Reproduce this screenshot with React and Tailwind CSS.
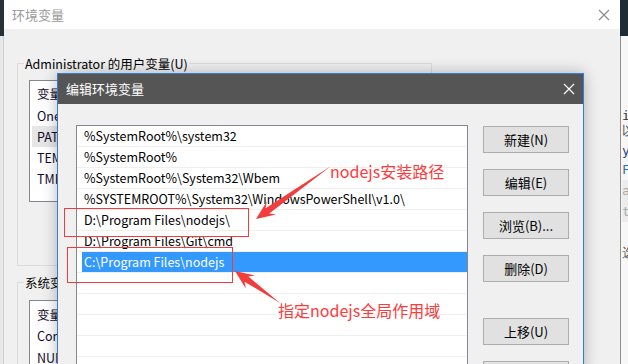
import React from 'react';

const paths = [
  '%SystemRoot%\\system32',
  '%SystemRoot%',
  '%SystemRoot%\\System32\\Wbem',
  '%SYSTEMROOT%\\System32\\WindowsPowerShell\\v1.0\\',
  'D:\\Program Files\\nodejs\\',
  'D:\\Program Files\\Git\\cmd',
  'C:\\Program Files\\nodejs',
  '',
  '',
  '',
  '',
  '',
];

const userVars = ['One', 'PATH', 'TEMP', 'TMP'];

// tapered annotation arrow, tail -> tip
const arrowPoints = (x1, y1, x2, y2, head = 19, wing = 8, neck = 3.2) => {
  const dx = x2 - x1;
  const dy = y2 - y1;
  const len = Math.hypot(dx, dy);
  const ux = dx / len;
  const uy = dy / len;
  const nx = -uy;
  const ny = ux;
  const bx = x2 - ux * head;
  const by = y2 - uy * head;
  const kx = x2 - ux * (head - 5);
  const ky = y2 - uy * (head - 5);
  return [
    [x1, y1],
    [kx + nx * neck, ky + ny * neck],
    [bx + nx * wing, by + ny * wing],
    [x2, y2],
    [bx - nx * wing, by - ny * wing],
    [kx - nx * neck, ky - ny * neck],
  ]
    .map((p) => p.map((v) => v.toFixed(1)).join(','))
    .join(' ');
};

const CloseIcon = ({ className }) => (
  <svg width="12" height="12" viewBox="0 0 12 12" className={className}>
    <path d="M1 1 L11 11 M11 1 L1 11" stroke="currentColor" strokeWidth="1.2" fill="none" />
  </svg>
);

const Button = ({ label, className = '' }) => (
  <div className={`h-[27px] w-[86px] flex items-center justify-center bg-[#e1e1e1] border border-[#adadad] text-[13px] text-black ${className}`}>
    {label}
  </div>
);

const App = () => {
  return (
    <div className="relative w-[628px] h-[364px] overflow-hidden bg-[#f0f0f0] font-['Noto_Sans_CJK_SC','Noto_Sans',sans-serif]">
      {/* editor behind, left edge */}
      <div className="absolute left-0 top-0 w-[4px] h-full flex flex-col">
        <div className="h-[36px] bg-[#263238]" />
        <div className="flex-1 bg-[#e8e8e8] border-r border-[#cfcfcf]" />
      </div>

      {/* editor behind, right edge */}
      <div className="absolute left-[620px] top-0 w-[8px] h-full flex flex-col overflow-hidden">
        <div className="h-[36px] bg-[#1f2b35]" />
        <div className="flex-1 bg-[#f7f7f7] border-l border-[#8f8f8f] font-['DejaVu_Sans_Mono',monospace] text-[13px] leading-[21px] pl-[1px] pt-[69px]">
          <div className="text-[#333]">i</div>
          <div className="text-[#555] -mt-[6px]">以</div>
          <div className="text-[#2a4a7a] -mt-[1px]">y</div>
          <div className="text-[#3a6fb0] -mt-[2px]">F</div>
          <div className="text-[#aaa] bg-[#ececec]">a</div>
          <div className="text-[#aaa] bg-[#ececec]">t</div>
          <div className="text-[#555] mt-[20px]">选</div>
        </div>
      </div>

      {/* back window: 环境变量 */}
      <div className="absolute left-[4px] top-0 w-[616px] h-full flex flex-col bg-[#f0f0f0]">
        <div className="h-[29px] bg-white flex items-center justify-between pl-[8px] pr-[10px] shrink-0">
          <span className="text-[13px] text-[#9a9a9a]">环境变量</span>
          <CloseIcon className="text-[#8a8a8a]" />
        </div>
        <div className="flex flex-col pl-[13px] pt-[26px]">
          <fieldset className="w-[415px] h-[211px] border border-[#dcdcdc] pt-[8px]">
            <legend className="ml-[6px] px-[1px] text-[12.5px] leading-[17px] text-black">Administrator 的用户变量(U)</legend>
            <div className="ml-[11px] w-[392px] h-[122px] bg-white border border-[#828790] flex flex-col pt-[2px] text-[12.5px] text-[#120a2a]">
              <div className="h-[21px] leading-[21px] pl-[7px]">变量</div>
              <div className="h-[1px]" />
              {userVars.map((v) => (
                <div
                  key={v}
                  className={`h-[21px] leading-[21px] pl-[5px] ml-[2px] ${v === 'PATH' ? 'bg-[#e6e6e6]' : ''}`}
                >
                  {v}
                </div>
              ))}
            </div>
          </fieldset>
          <fieldset className="mt-[8px] w-[415px] h-[120px] border border-[#dcdcdc] pt-[9px]">
            <legend className="ml-[6px] px-[1px] text-[12.5px] leading-[17px] text-black">系统变量(S)</legend>
            <div className="ml-[11px] w-[392px] h-[100px] bg-white border border-[#828790] flex flex-col pt-[3px] text-[12.5px] text-[#120a2a]">
              <div className="h-[21px] leading-[21px] pl-[7px]">变量</div>
              <div className="h-[22px] leading-[22px] pl-[7px]">ComSpec</div>
              <div className="h-[21px] leading-[21px] pl-[7px]">NUMBER_OF_PROCESSORS</div>
            </div>
          </fieldset>
        </div>
      </div>

      {/* front window: 编辑环境变量 */}
      <div className="absolute left-[57px] top-[73px] w-[527px] h-[300px] flex flex-col border border-[#2f7fd6] bg-[#f0f0f0] shadow-[0_0_14px_rgba(0,0,0,0.28)]">
        <div className="h-[30px] bg-[#555555] flex items-center justify-between pl-[8px] pr-[8px] shrink-0">
          <span className="text-[13px] text-white">编辑环境变量</span>
          <CloseIcon className="text-white" />
        </div>
        <div className="flex pl-[18px] pt-[21px] gap-[15px]">
          <div className="w-[392px] h-[260px] bg-white border border-[#828790] flex flex-col text-[12.5px] text-black">
            {paths.map((p, i) => {
              const selected = i === 6;
              return (
                <div key={i} className="h-[21px] border-b border-[#efefef] pl-[5px] flex shrink-0">
                  <div className={`flex-1 pl-[2px] leading-[20px] whitespace-nowrap ${selected ? 'bg-[#3399ff] text-white' : ''}`}>
                    {p}
                  </div>
                </div>
              );
            })}
          </div>
          <div className="flex flex-col gap-[16px] pt-[1px]">
            <Button label="新建(N)" />
            <Button label="编辑(E)" />
            <Button label="浏览(B)..." />
            <Button label="删除(D)" />
            <Button label="上移(U)" className="mt-[20px]" />
            <Button label="下移(O)" />
          </div>
        </div>
      </div>

      {/* annotations */}
      <div className="absolute left-[64px] top-[208px] w-[185px] h-[29px] border border-[#f23c3c]" />
      <div className="absolute left-[67px] top-[247px] w-[166px] h-[36px] border border-[#f23c3c]" />
      <svg className="absolute left-0 top-0 pointer-events-none" width="628" height="364">
        <polygon points={arrowPoints(331, 166, 256, 219)} fill="#f33c3c" />
        <polygon points={arrowPoints(280, 303, 235, 271)} fill="#f33c3c" />
      </svg>
      <div className="absolute left-[330px] top-[160px] text-[16px] leading-[22px] text-[#ff3a3a] whitespace-nowrap">nodejs安装路径</div>
      <div className="absolute left-[278px] top-[299px] text-[16px] leading-[22px] text-[#ff3a3a] whitespace-nowrap">指定nodejs全局作用域</div>
    </div>
  );
};

export default App;
